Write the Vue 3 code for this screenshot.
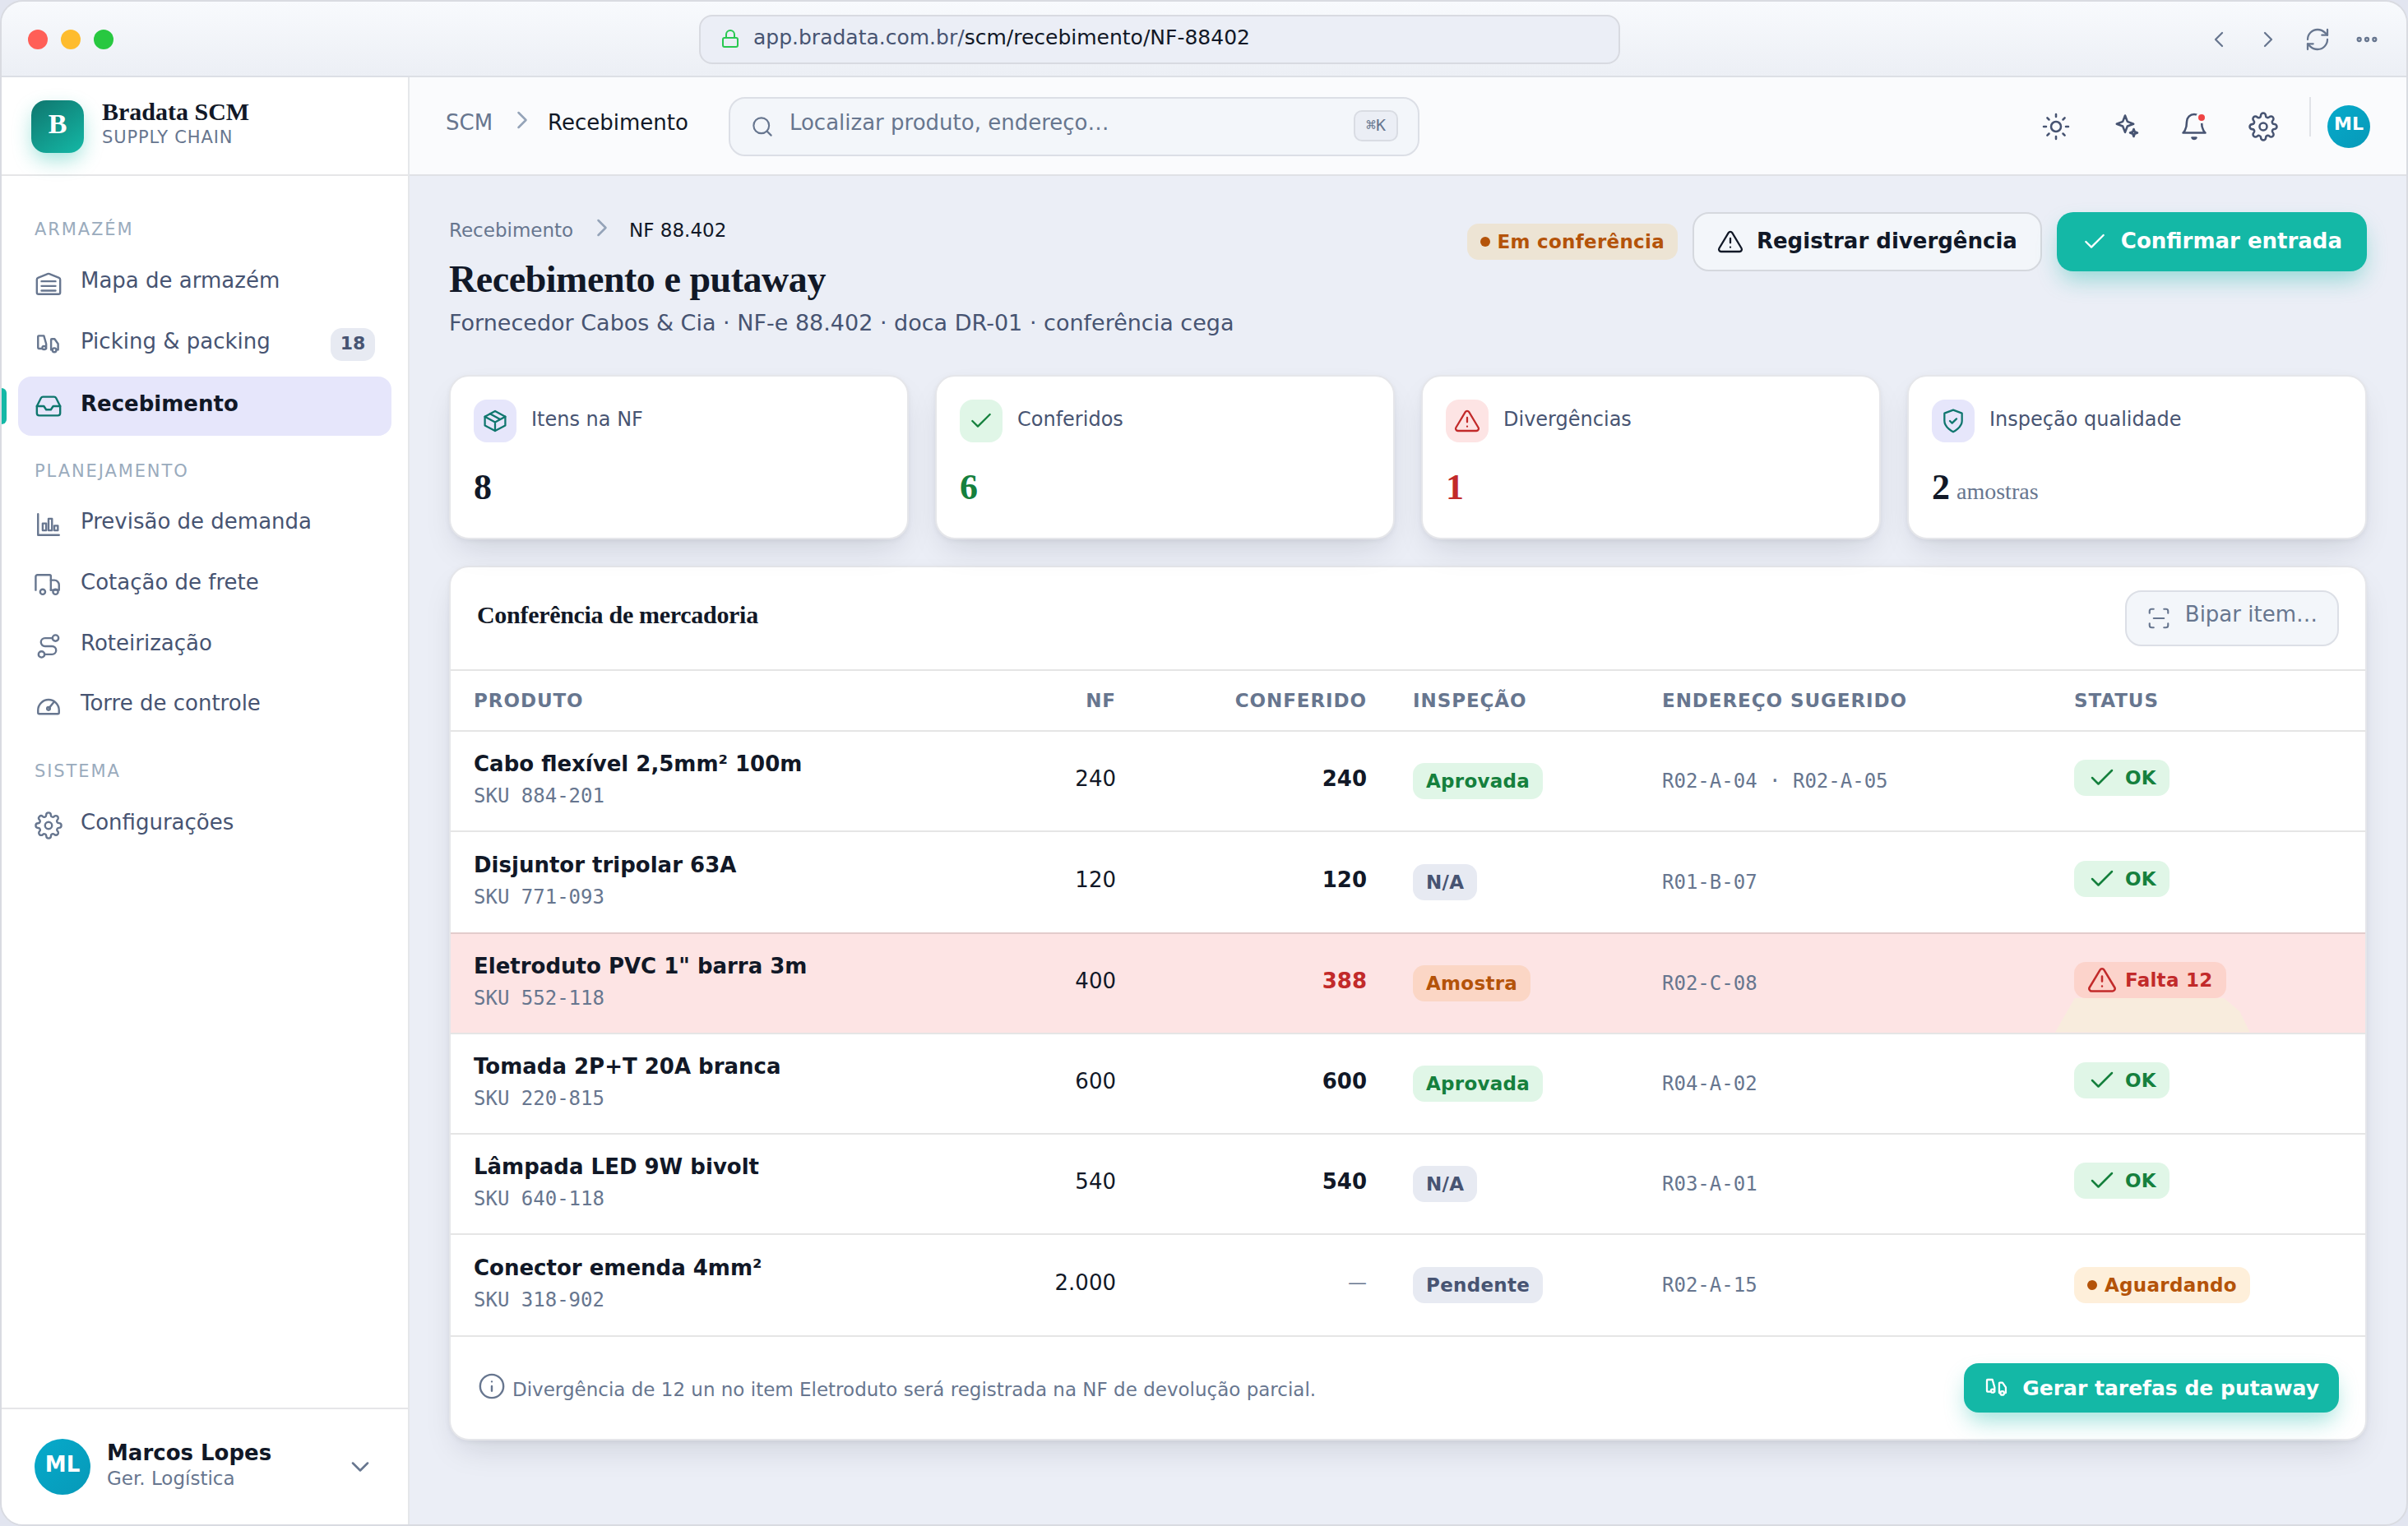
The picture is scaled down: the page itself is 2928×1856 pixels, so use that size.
<template>
  <div class="window">
    <header class="titlebar">
      <div class="lights">
        <span class="light red"></span>
        <span class="light amber"></span>
        <span class="light green"></span>
      </div>
      <div class="url">
        <Icon name="lock" :size="24" :stroke="2" class="lock" />
        <span class="url-text">app.bradata.com.br/<b>scm/recebimento/NF-88402</b></span>
      </div>
      <div class="window-nav">
        <Icon name="chevronLeft" :size="32" />
        <Icon name="chevronRight" :size="32" />
        <Icon name="refresh" :size="32" />
        <Icon name="dots" :size="32" />
      </div>
    </header>

    <div class="shell">
      <aside class="sidebar">
        <div class="brand">
          <div class="logo">B</div>
          <div class="brand-text">
            <strong>Bradata SCM</strong>
            <span>SUPPLY CHAIN</span>
          </div>
        </div>

        <nav class="nav">
          <template v-for="group in navGroups" :key="group.title">
            <h3>{{ group.title }}</h3>
            <a
              v-for="item in group.items"
              :key="item.label"
              class="nav-item"
              :class="{ active: item.active, counted: item.count }"
            >
              <Icon :name="item.icon" :size="34" />
              <span class="nav-label">{{ item.label }}</span>
              <span v-if="item.count" class="count">{{ item.count }}</span>
            </a>
          </template>
        </nav>

        <div class="user">
          <div class="avatar large">ML</div>
          <div class="user-text">
            <strong>Marcos Lopes</strong>
            <span>Ger. Logística</span>
          </div>
          <Icon name="chevronDown" :size="36" />
        </div>
      </aside>

      <main class="main">
        <div class="topbar">
          <div class="crumbs">
            <span>SCM</span>
            <Icon name="chevronRight" :size="36" />
            <span class="current">Recebimento</span>
          </div>
          <div class="search">
            <Icon name="search" :size="30" />
            <span class="placeholder">Localizar produto, endereço…</span>
            <kbd>⌘K</kbd>
          </div>
          <div class="tools">
            <button class="tool"><Icon name="sun" :size="36" /></button>
            <button class="tool"><Icon name="sparkle" :size="36" /></button>
            <button class="tool">
              <Icon name="bell" :size="36" />
              <span class="alert-dot"></span>
            </button>
            <button class="tool"><Icon name="gear" :size="36" /></button>
            <span class="divider"></span>
            <div class="avatar">ML</div>
          </div>
        </div>

        <div class="content">
          <section class="page-head">
            <div class="page-title">
              <div class="crumbs small">
                <span>Recebimento</span>
                <Icon name="chevronRight" :size="36" />
                <span class="current">NF 88.402</span>
              </div>
              <h1>Recebimento e putaway</h1>
              <p>Fornecedor Cabos &amp; Cia · NF-e 88.402 · doca DR-01 · conferência cega</p>
            </div>
            <div class="actions">
              <span class="chip warn-dim"><i class="dot"></i>Em conferência</span>
              <button class="btn ghost">
                <Icon name="alert" :size="32" />
                <span>Registrar divergência</span>
              </button>
              <button class="btn primary">
                <Icon name="check" :size="32" />
                <span>Confirmar entrada</span>
              </button>
            </div>
          </section>

          <section class="stats">
            <article v-for="stat in stats" :key="stat.label" class="stat">
              <div class="stat-head">
                <span class="tile" :class="stat.tone"><Icon :name="stat.icon" :size="32" /></span>
                <span class="stat-label">{{ stat.label }}</span>
              </div>
              <div class="stat-value" :class="stat.tone">
                {{ stat.value }} <small v-if="stat.unit">{{ stat.unit }}</small>
              </div>
            </article>
          </section>

          <section class="panel">
            <header class="panel-head">
              <h2>Conferência de mercadoria</h2>
              <div class="scan">
                <Icon name="scan" :size="30" />
                <span>Bipar item…</span>
              </div>
            </header>

            <div class="row head">
              <span>PRODUTO</span>
              <span class="num">NF</span>
              <span class="num">CONFERIDO</span>
              <span>INSPEÇÃO</span>
              <span>ENDEREÇO SUGERIDO</span>
              <span>STATUS</span>
            </div>
            <div class="rows">
              <div v-for="row in rows" :key="row.sku" class="row" :class="{ issue: row.issue }">
                <div class="product">
                  <strong>{{ row.name }}</strong>
                  <span>SKU {{ row.sku }}</span>
                </div>
                <div class="num">{{ row.nf }}</div>
                <div class="num checked" :class="{ pending: row.checked === '—' }">{{ row.checked }}</div>
                <div><span class="chip" :class="row.inspectionTone">{{ row.inspection }}</span></div>
                <div class="address">{{ row.address }}</div>
                <div>
                  <span class="chip" :class="[row.statusTone, { 'with-icon': row.statusIcon }]">
                    <Icon v-if="row.statusIcon" :name="row.statusIcon" :size="36" />
                    <i v-else class="dot"></i>
                    {{ row.status }}
                  </span>
                </div>
              </div>
            </div>

            <footer class="panel-foot">
              <Icon name="info" :size="34" />
              <p>Divergência de 12 un no item Eletroduto será registrada na NF de devolução parcial.</p>
              <button class="btn primary compact">
                <Icon name="picking" :size="32" />
                <span>Gerar tarefas de putaway</span>
              </button>
            </footer>
          </section>
        </div>
      </main>
    </div>
  </div>
</template>

<script setup>
import { h } from 'vue'

const paths = {
  lock: '<rect x="3" y="11" width="18" height="11" rx="2"/><path d="M7 11V7a5 5 0 0 1 10 0v4"/>',
  chevronLeft: '<path d="m15 18-6-6 6-6"/>',
  chevronRight: '<path d="m9 18 6-6-6-6"/>',
  chevronDown: '<path d="m6 9 6 6 6-6"/>',
  refresh:
    '<path d="M3 12a9 9 0 0 1 9-9 9.75 9.75 0 0 1 6.74 2.74L21 8"/><path d="M21 3v5h-5"/><path d="M21 12a9 9 0 0 1-9 9 9.75 9.75 0 0 1-6.74-2.74L3 16"/><path d="M8 16H3v5"/>',
  dots: '<circle cx="5" cy="12" r="1.5"/><circle cx="12" cy="12" r="1.5"/><circle cx="19" cy="12" r="1.5"/>',
  search: '<circle cx="11" cy="11" r="7.5"/><path d="m20.5 20.5-4-4"/>',
  sun: '<circle cx="12" cy="12" r="4"/><path d="M12 2v2M12 20v2M4.93 4.93l1.41 1.41M17.66 17.66l1.41 1.41M2 12h2M20 12h2M6.34 17.66l-1.41 1.41M19.07 4.93l-1.41 1.41"/>',
  sparkle:
    '<path d="m12 3 1.9 4.9 4.9 1.9-4.9 1.9L12 16.6l-1.9-4.9-4.9-1.9 4.9-1.9z"/><path d="m19 14 .8 2.2 2.2.8-2.2.8L19 20l-.8-2.2L16 17l2.2-.8z"/>',
  bell: '<path d="M6 8a6 6 0 0 1 12 0c0 7 3 9 3 9H3s3-2 3-9"/><path d="M10.3 21a1.94 1.94 0 0 0 3.4 0z"/>',
  gear: '<circle cx="12" cy="12" r="3"/><path d="M19.4 15a1.65 1.65 0 0 0 .33 1.82l.06.06a2 2 0 1 1-2.83 2.83l-.06-.06a1.65 1.65 0 0 0-1.82-.33 1.65 1.65 0 0 0-1 1.51V21a2 2 0 0 1-4 0v-.09A1.65 1.65 0 0 0 9 19.4a1.65 1.65 0 0 0-1.82.33l-.06.06a2 2 0 1 1-2.83-2.83l.06-.06a1.65 1.65 0 0 0 .33-1.82 1.65 1.65 0 0 0-1.51-1H3a2 2 0 0 1 0-4h.09A1.65 1.65 0 0 0 4.6 9a1.65 1.65 0 0 0-.33-1.82l-.06-.06a2 2 0 1 1 2.83-2.83l.06.06a1.65 1.65 0 0 0 1.82.33H9a1.65 1.65 0 0 0 1-1.51V3a2 2 0 0 1 4 0v.09a1.65 1.65 0 0 0 1 1.51 1.65 1.65 0 0 0 1.82-.33l.06-.06a2 2 0 1 1 2.83 2.83l-.06.06a1.65 1.65 0 0 0-.33 1.82V9a1.65 1.65 0 0 0 1.51 1H21a2 2 0 0 1 0 4h-.09a1.65 1.65 0 0 0-1.51 1z"/>',
  warehouse:
    '<path d="M2 8.4v11.1A1.5 1.5 0 0 0 3.5 21h17a1.5 1.5 0 0 0 1.5-1.5V8.4a1.6 1.6 0 0 0-1-1.5l-8.3-3.3a2 2 0 0 0-1.4 0L3 6.9a1.6 1.6 0 0 0-1 1.5Z"/><path d="M6 10h12M6 14h12M6 18h12"/>',
  picking:
    '<path d="M6.5 15.5H3.6a.6.6 0 0 1-.6-.6V5.1a.6.6 0 0 1 .6-.6H8l2 7v4"/><circle cx="8.2" cy="14.8" r="1.5"/><path d="M15 16.5h-.8V7.8a.6.6 0 0 1 .6-.6h2.4l3 4.3v5h-1"/><circle cx="17" cy="16.8" r="1.7"/>',
  inbox:
    '<path d="M22 12h-6l-2 3h-4l-2-3H2"/><path d="M5.45 5.11 2 12v6a2 2 0 0 0 2 2h16a2 2 0 0 0 2-2v-6l-3.45-6.89A2 2 0 0 0 16.76 4H7.24a2 2 0 0 0-1.79 1.11z"/>',
  bars: '<path d="M3 3v18h18"/><rect x="7" y="11" width="3" height="6"/><rect x="12" y="7" width="3" height="10"/><rect x="17" y="13" width="3" height="4"/>',
  truck:
    '<path d="M1 16V4.5A1.5 1.5 0 0 1 2.5 3H13a1 1 0 0 1 1 1v12"/><path d="M14 7.5h3a4 4 0 0 1 4 4V16h-7"/><circle cx="7" cy="17.5" r="2.2"/><circle cx="18" cy="17.5" r="2.2"/>',
  route:
    '<circle cx="6" cy="19" r="2.6"/><circle cx="18" cy="5" r="2.6"/><path d="M8.6 19H15a3.5 3.5 0 0 0 0-7H9a3.5 3.5 0 0 1 0-7h6.4"/>',
  gauge:
    '<path d="M4 18.5h16a1 1 0 0 0 1-1v-2.1a9 9 0 0 0-18 0v2.1a1 1 0 0 0 1 1z"/><path d="m12.5 13.5 4-5"/><circle cx="12" cy="14" r="1.3"/>',
  alert:
    '<path d="M10.29 3.86 1.82 18a2 2 0 0 0 1.71 3h16.94a2 2 0 0 0 1.71-3L13.71 3.86a2 2 0 0 0-3.42 0z"/><path d="M12 9v4M12 17h.01"/>',
  check: '<path d="M20 6 9 17l-5-5"/>',
  box: '<path d="m12 3 9.3 5.1v8L12 21l-9.3-4.9v-8z"/><path d="m2.7 8.1 9.3 5 9.3-5M12 13.1V21M7.4 5.5l9.2 5"/>',
  shield: '<path d="M12 22s8-4 8-10V5l-8-3-8 3v7c0 6 8 10 8 10z"/><path d="m9 12 2 2 4-4"/>',
  scan: '<path d="M3 7V5a2 2 0 0 1 2-2h2M17 3h2a2 2 0 0 1 2 2v2M21 17v2a2 2 0 0 1-2 2h-2M7 21H5a2 2 0 0 1-2-2v-2M7 12h10"/>',
  info: '<circle cx="12" cy="12" r="10"/><path d="M12 16v-4M12 8h.01"/>',
}

function Icon(props) {
  return h('svg', {
    class: 'icon',
    viewBox: '0 0 24 24',
    width: props.size,
    height: props.size,
    'stroke-width': props.stroke || 1.7,
    innerHTML: paths[props.name],
  })
}
Icon.props = ['name', 'size', 'stroke']

const navGroups = [
  {
    title: 'ARMAZÉM',
    items: [
      { label: 'Mapa de armazém', icon: 'warehouse' },
      { label: 'Picking & packing', icon: 'picking', count: 18 },
      { label: 'Recebimento', icon: 'inbox', active: true },
    ],
  },
  {
    title: 'PLANEJAMENTO',
    items: [
      { label: 'Previsão de demanda', icon: 'bars' },
      { label: 'Cotação de frete', icon: 'truck' },
      { label: 'Roteirização', icon: 'route' },
      { label: 'Torre de controle', icon: 'gauge' },
    ],
  },
  {
    title: 'SISTEMA',
    items: [{ label: 'Configurações', icon: 'gear' }],
  },
]

const stats = [
  { label: 'Itens na NF', value: '8', icon: 'box', tone: 'neutral' },
  { label: 'Conferidos', value: '6', icon: 'check', tone: 'good' },
  { label: 'Divergências', value: '1', icon: 'alert', tone: 'bad' },
  { label: 'Inspeção qualidade', value: '2', unit: 'amostras', icon: 'shield', tone: 'neutral' },
]

const ok = { status: 'OK', statusTone: 'good', statusIcon: 'check' }
const approved = { inspection: 'Aprovada', inspectionTone: 'good' }
const notApplicable = { inspection: 'N/A', inspectionTone: 'mute' }

const rows = [
  { name: 'Cabo flexível 2,5mm² 100m', sku: '884-201', nf: '240', checked: '240', address: 'R02-A-04 · R02-A-05', ...approved, ...ok },
  { name: 'Disjuntor tripolar 63A', sku: '771-093', nf: '120', checked: '120', address: 'R01-B-07', ...notApplicable, ...ok },
  {
    name: 'Eletroduto PVC 1" barra 3m',
    sku: '552-118',
    nf: '400',
    checked: '388',
    address: 'R02-C-08',
    inspection: 'Amostra',
    inspectionTone: 'sample',
    status: 'Falta 12',
    statusTone: 'bad',
    statusIcon: 'alert',
    issue: true,
  },
  { name: 'Tomada 2P+T 20A branca', sku: '220-815', nf: '600', checked: '600', address: 'R04-A-02', ...approved, ...ok },
  { name: 'Lâmpada LED 9W bivolt', sku: '640-118', nf: '540', checked: '540', address: 'R03-A-01', ...notApplicable, ...ok },
  {
    name: 'Conector emenda 4mm²',
    sku: '318-902',
    nf: '2.000',
    checked: '—',
    address: 'R02-A-15',
    inspection: 'Pendente',
    inspectionTone: 'mute',
    status: 'Aguardando',
    statusTone: 'warn',
  },
]
</script>

<style>
body {
  margin: 0;
  background: #e2e5f0;
}
</style>

<style scoped>
.window,
.window * {
  box-sizing: border-box;
}
.window {
  --line: rgba(0, 0, 0, 0.1);
  --ink: #111827;
  --text: #475472;
  --muted: #67768f;
  --teal: #14b8a6;
  --serif: 'Liberation Serif', serif;
  --mono: 'DejaVu Sans Mono', monospace;
  display: flex;
  flex-direction: column;
  width: 2928px;
  height: 1856px;
  border: 2px solid #d9dbe1;
  border-radius: 28px;
  overflow: hidden;
  background: #ebeef6;
  font-family: 'DejaVu Sans', sans-serif;
  font-size: 26px;
  color: var(--ink);
}
.window h1,
.window h2,
.window h3,
.window p {
  margin: 0;
}
.window button {
  font-family: inherit;
  border: 0;
  background: none;
  padding: 0;
}
.icon {
  display: block;
  flex: none;
  fill: none;
  stroke: currentColor;
  stroke-linecap: round;
  stroke-linejoin: round;
}

/* title bar */
.titlebar {
  flex: none;
  display: flex;
  align-items: center;
  justify-content: space-between;
  height: 92px;
  padding: 2px 32px 0;
  border-bottom: 2px solid #dcdfe5;
  background: linear-gradient(#f8fafd, #eceff5);
}
.lights {
  display: flex;
  gap: 16px;
}
.light {
  width: 24px;
  height: 24px;
  border-radius: 50%;
}
.light.red {
  background: #ff5f57;
}
.light.amber {
  background: #febc2e;
}
.light.green {
  background: #28c840;
}
.url {
  display: flex;
  align-items: center;
  gap: 16px;
  width: 1120px;
  height: 60px;
  padding: 0 24px;
  border: 2px solid #d8dae1;
  border-radius: 16px;
  background: #ebeef6;
  font-size: 25px;
  color: var(--text);
}
.lock {
  color: #28c850;
  margin-bottom: 2px;
}
.url-text {
  padding-bottom: 5px;
}
.url b {
  font-weight: 400;
  color: var(--ink);
}
.window-nav {
  display: flex;
  gap: 28px;
  color: var(--muted);
}

.shell {
  flex: 1;
  display: flex;
  min-height: 0;
}

/* sidebar */
.sidebar {
  flex: none;
  display: flex;
  flex-direction: column;
  width: 496px;
  border-right: 2px solid #e5e7ea;
  background: #fff;
}
.brand {
  flex: none;
  display: flex;
  align-items: center;
  gap: 22px;
  height: 120px;
  padding: 2px 36px 0;
  border-bottom: 2px solid #e6e6e8;
}
.logo {
  display: grid;
  place-items: center;
  width: 64px;
  height: 64px;
  padding-bottom: 6px;
  border-radius: 18px;
  background: linear-gradient(145deg, #0f766e, #14b8a6);
  box-shadow: 0 10px 24px -2px rgba(20, 184, 166, 0.4);
  font: 700 34px var(--serif);
  color: #fff;
}
.brand-text {
  display: flex;
  flex-direction: column;
  gap: 2px;
  padding-bottom: 9px;
}
.brand-text strong {
  font: 700 30px/32px var(--serif);
}
.brand-text span {
  font-size: 21px;
  line-height: 26px;
  letter-spacing: 0.84px;
  color: var(--muted);
}
.nav {
  flex: 1;
  display: flex;
  flex-direction: column;
  gap: 2px;
  padding: 24px 20px 0;
}
.nav h3 {
  padding: 29px 20px 16px;
  font-size: 21px;
  line-height: 24px;
  font-weight: 400;
  letter-spacing: 1.9px;
  color: #9aabbd;
}
.nav-item {
  position: relative;
  display: flex;
  align-items: center;
  gap: 22px;
  height: 71.6px;
  padding: 0 20px;
  border-radius: 16px;
  color: var(--muted);
}
.nav-item.counted {
  height: 73px;
}
.nav-item.active {
  height: 72px;
  background: #e6e6fb;
  color: #0f766e;
}
.nav-item.active::before {
  content: '';
  position: absolute;
  left: -20px;
  top: 14px;
  width: 6px;
  height: 44px;
  border-radius: 0 6px 6px 0;
  background: var(--teal);
}
.nav-label {
  flex: 1;
  padding-bottom: 8px;
  color: var(--text);
}
.active .nav-label {
  padding-bottom: 6px;
  font-weight: 700;
  color: var(--ink);
}
.count {
  display: grid;
  place-items: center;
  width: 54px;
  height: 40px;
  padding-bottom: 4px;
  border-radius: 14px;
  background: #e7eaf2;
  font-size: 22px;
  font-weight: 700;
  color: var(--text);
}
.user {
  flex: none;
  display: flex;
  align-items: center;
  gap: 20px;
  height: 142px;
  padding: 0 40px;
  border-top: 2px solid #e6e6e8;
  color: var(--muted);
}
.user-text {
  flex: 1;
  display: flex;
  flex-direction: column;
  padding-bottom: 4px;
}
.user-text strong {
  line-height: 32px;
  color: var(--ink);
}
.user-text span {
  font-size: 23px;
  line-height: 30px;
}
.avatar {
  display: grid;
  place-items: center;
  width: 52px;
  height: 52px;
  padding-bottom: 7px;
  border-radius: 50%;
  background: linear-gradient(135deg, #06aacb, #0799b8);
  font-size: 22px;
  font-weight: 700;
  color: #fff;
}
.avatar.large {
  width: 68px;
  height: 68px;
  padding-bottom: 6px;
  font-size: 26px;
}

/* top bar */
.main {
  flex: 1;
  min-width: 0;
}
.topbar {
  display: flex;
  align-items: center;
  height: 120px;
  padding: 2px 44px 0;
  border-bottom: 2px solid #dfe1e6;
  background: #fafbfd;
}
.crumbs {
  display: flex;
  align-items: center;
  color: var(--muted);
}
.crumbs .icon {
  margin: 0 13px 16px 18px;
  color: #94a3b8;
}
.crumbs span {
  padding-bottom: 10px;
}
.crumbs .current {
  color: var(--ink);
}
.search {
  display: flex;
  align-items: center;
  gap: 18px;
  width: 840px;
  height: 72px;
  margin-left: 49px;
  padding: 0 24px;
  border: 2px solid #dcdfe6;
  border-radius: 20px;
  background: #f3f6fa;
  color: var(--muted);
}
.placeholder {
  flex: 1;
  padding-bottom: 10px;
}
kbd {
  display: grid;
  place-items: center;
  width: 54px;
  height: 38px;
  margin-bottom: 2px;
  padding-bottom: 3px;
  border: 2px solid #d9dce3;
  border-radius: 10px;
  background: #ebeef5;
  font: 20px var(--mono);
}
.tools {
  display: flex;
  align-items: center;
  gap: 8px;
  margin-left: auto;
  color: var(--text);
}
.window .tool {
  position: relative;
  display: grid;
  place-items: center;
  width: 76px;
  height: 72px;
  color: inherit;
}
.alert-dot {
  position: absolute;
  right: 22px;
  top: 18px;
  width: 14px;
  height: 14px;
  border: 3px solid #fafbfd;
  border-radius: 50%;
  background: #ef4444;
}
.divider {
  align-self: flex-start;
  width: 2px;
  height: 48px;
  margin: 0 12px 0 10px;
  background: #e1e3e8;
}

/* page */
.content {
  padding: 44px 48px 0;
}
.page-head {
  display: flex;
  justify-content: space-between;
  height: 198px;
}
.page-title {
  padding-top: 8px;
}
.crumbs.small {
  height: 28px;
  font-size: 23px;
}
.crumbs.small span {
  padding: 0;
}
.crumbs.small .icon {
  margin: 0 15px 7px 17px;
}
h1 {
  padding-top: 18px;
  font: 700 46px/56px var(--serif);
  letter-spacing: -0.46px;
}
.page-title p {
  padding-top: 8px;
  font-size: 27px;
  line-height: 34px;
  color: var(--text);
}
.actions {
  display: flex;
  align-items: center;
  gap: 18px;
  height: 72px;
}
.window .btn {
  display: flex;
  align-items: center;
  gap: 16px;
  height: 72px;
  padding: 0 30px;
  border-radius: 20px;
  font-size: 26px;
  font-weight: 700;
  color: var(--ink);
}
.btn span {
  padding-bottom: 2px;
}
.window .btn.ghost {
  padding: 0 28px;
  border: 2px solid #d5d8de;
  background: #f3f6fa;
}
.window .btn.primary {
  background: var(--teal);
  box-shadow: 0 14px 28px -5px rgba(20, 184, 166, 0.42);
  color: #fff;
}
.window .btn.compact {
  gap: 15px;
  height: 60px;
  padding: 0 24px;
  border-radius: 18px;
  font-size: 25px;
}
.btn.compact span {
  padding: 0;
}
.chip {
  position: relative;
  display: inline-flex;
  align-items: center;
  gap: 9px;
  height: 44px;
  padding: 0 16px;
  border-radius: 14px;
  font-size: 23px;
  font-weight: 700;
  letter-spacing: 0.28px;
  white-space: nowrap;
}
.chip.with-icon {
  gap: 10px;
  margin-bottom: 9px;
}
.dot {
  width: 12px;
  height: 12px;
  border-radius: 50%;
  background: currentColor;
}
.chip.good {
  background: #e0f6e7;
  color: #15803d;
}
.chip.mute {
  background: #e7eaf2;
  color: var(--text);
}
.chip.warn {
  background: #feefda;
  color: #b45309;
}
.chip.warn-dim {
  background: #ede4d4;
  color: #b45309;
}
.chip.sample {
  background: #fbd6c5;
  color: #b45309;
}
.chip.bad {
  background: #fcd3cb;
  color: #c22a2a;
}
/* warm glow from the missing-units chip down to the row edge */
.issue .chip.bad::after {
  content: '';
  position: absolute;
  top: 100%;
  left: -23px;
  right: -29px;
  height: 42px;
  background: #f8ecdd;
  clip-path: polygon(24px 0, calc(100% - 32px) 0, calc(100% - 12px) 40%, 100% 100%, 0 100%);
}
.stats {
  display: grid;
  grid-template-columns: repeat(4, 1fr);
  gap: 32px;
  margin-bottom: 32px;
}
.stat,
.panel {
  border: 2px solid #e5e6ea;
  border-radius: 24px;
  background: #fff;
  box-shadow:
    0 2px 6px rgba(15, 23, 42, 0.05),
    0 18px 40px -12px rgba(15, 23, 42, 0.15);
}
.stat {
  height: 200px;
  padding: 28px;
}
.stat-head {
  display: flex;
  align-items: center;
  gap: 18px;
}
.tile {
  display: grid;
  place-items: center;
  width: 52px;
  height: 52px;
  border-radius: 16px;
}
.tile.neutral {
  background: #e6e6fb;
  color: #0f766e;
}
.tile.good {
  background: #e0f6e7;
  color: #15803d;
}
.tile.bad {
  background: #fde4e4;
  color: #c22a2a;
}
.stat-label {
  padding-bottom: 4px;
  font-size: 24px;
  color: var(--text);
}
.stat-value {
  padding-top: 30px;
  font: 700 44px/50px var(--serif);
}
.stat-value.good {
  color: #15803d;
}
.stat-value.bad {
  color: #c22a2a;
}
.stat-value small {
  margin-left: -3px;
  font-size: 28px;
  font-weight: 400;
  color: var(--muted);
}

/* table */
.panel-head {
  display: flex;
  align-items: center;
  justify-content: space-between;
  height: 124px;
  padding: 0 32px;
}
h2 {
  font: 700 30px/34px var(--serif);
  letter-spacing: -0.3px;
  padding-bottom: 8px;
}
.scan {
  display: flex;
  align-items: center;
  gap: 17px;
  height: 68px;
  padding: 0 24px;
  border: 2px solid #dcdfe6;
  border-radius: 20px;
  background: #f3f6fa;
  color: var(--muted);
}
.scan span {
  padding-bottom: 10px;
}
.row {
  display: grid;
  grid-template-columns: 637px 200px 305px 303px 501px 1fr;
  align-items: center;
  height: 122px;
  border-top: 2px solid var(--line);
}
.row:nth-child(4n + 2) {
  height: 124px;
}
.row > * {
  padding: 0 28px;
}
.row.head {
  height: 74px;
  font-size: 23px;
  font-weight: 700;
  letter-spacing: 0.92px;
  color: var(--muted);
}
.row.issue {
  background: #fde4e4;
}
.num {
  text-align: right;
}
.row:not(.head) .num {
  padding-bottom: 6px;
}
.checked {
  font-weight: 700;
}
.issue .checked {
  color: #c22a2a;
}
.checked.pending {
  font-size: 23px;
  font-weight: 400;
  color: var(--muted);
}
.product {
  display: flex;
  flex-direction: column;
  gap: 8px;
}
.row .product {
  padding-bottom: 4px;
}
.product strong {
  line-height: 32px;
}
.product span {
  font: 24px/30px var(--mono);
  color: var(--muted);
}
.address {
  font: 24px/30px var(--mono);
  color: var(--muted);
}
.panel-foot {
  display: flex;
  align-items: center;
  gap: 8px;
  height: 126px;
  padding: 0 32px 0 33px;
  border-top: 2px solid var(--line);
  color: var(--muted);
}
.panel-foot > .icon {
  margin-bottom: 4px;
}
.panel-foot p {
  flex: 1;
  padding-top: 4px;
  font-size: 23px;
}
</style>
